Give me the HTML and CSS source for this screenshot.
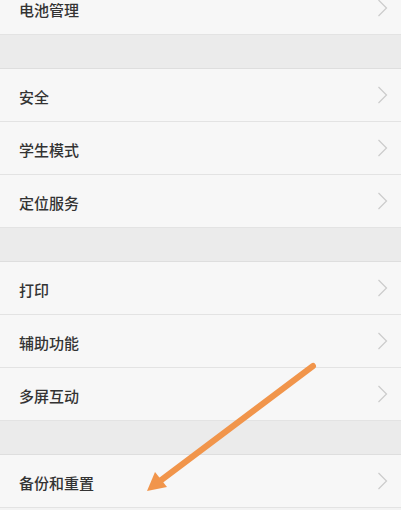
FILE: index.html
```html
<!DOCTYPE html>
<html lang="zh">
<head>
<meta charset="utf-8">
<link rel="stylesheet" href="styles.css">
</head>
<body>
<div class="page">
  <div class="list">
    <div class="row first"><span class="label">电池管理</span><svg class="chev" width="11" height="18" viewBox="0 0 11 18"><polyline points="1.5,1 9.5,9 1.5,17" /></svg></div>
  </div>
  <div class="gap"></div>
  <div class="list">
    <div class="row"><span class="label">安全</span><svg class="chev" width="11" height="18" viewBox="0 0 11 18"><polyline points="1.5,1 9.5,9 1.5,17" /></svg></div>
    <div class="row"><span class="label">学生模式</span><svg class="chev" width="11" height="18" viewBox="0 0 11 18"><polyline points="1.5,1 9.5,9 1.5,17" /></svg></div>
    <div class="row"><span class="label">定位服务</span><svg class="chev" width="11" height="18" viewBox="0 0 11 18"><polyline points="1.5,1 9.5,9 1.5,17" /></svg></div>
  </div>
  <div class="gap"></div>
  <div class="list">
    <div class="row"><span class="label">打印</span><svg class="chev" width="11" height="18" viewBox="0 0 11 18"><polyline points="1.5,1 9.5,9 1.5,17" /></svg></div>
    <div class="row"><span class="label">辅助功能</span><svg class="chev" width="11" height="18" viewBox="0 0 11 18"><polyline points="1.5,1 9.5,9 1.5,17" /></svg></div>
    <div class="row"><span class="label">多屏互动</span><svg class="chev" width="11" height="18" viewBox="0 0 11 18"><polyline points="1.5,1 9.5,9 1.5,17" /></svg></div>
  </div>
  <div class="gap"></div>
  <div class="list">
    <div class="row"><span class="label">备份和重置</span><svg class="chev" width="11" height="18" viewBox="0 0 11 18"><polyline points="1.5,1 9.5,9 1.5,17" /></svg></div>
  </div>
  <svg class="arrow" width="401" height="510" viewBox="0 0 401 510">
    <line x1="313" y1="366" x2="160" y2="481" stroke="#f1954b" stroke-width="6" stroke-linecap="round"/>
    <polygon points="147,491 155,472 167,487" fill="#f1954b"/>
  </svg>
</div>
</body>
</html>
```

FILE: styles.css
```css
html, body {
  margin: 0;
  padding: 0;
  background: #f3f3f3;
}
body {
  width: 401px;
  height: 510px;
  overflow: hidden;
  font-family: "Noto Sans CJK SC", "Noto Sans", sans-serif;
}
.page {
  position: relative;
  width: 401px;
  height: 510px;
  overflow: hidden;
  display: flex;
  flex-direction: column;
}
.list {
  display: flex;
  flex-direction: column;
  background: #f7f7f7;
}
.row {
  box-sizing: content-box;
  height: 49px;
  padding: 3px 13px 0 19px;
  border-bottom: 1px solid #e3e3e3;
  display: flex;
  align-items: center;
  justify-content: space-between;
}
.row.first {
  margin-top: -18px;
}
.label {
  font-size: 15px;
  font-weight: 500;
  color: #333333;
  line-height: 20px;
}
.chev {
  display: block;
  margin-top: -3px;
  fill: none;
  stroke: #cbcbcb;
  stroke-width: 1.2;
}
.gap {
  height: 33px;
  background: #ebebeb;
  border-bottom: 1px solid #dedede;
  flex-shrink: 0;
}
.gap:first-of-type {
  height: 32px;
}
.arrow {
  position: absolute;
  left: 0;
  top: 0;
}
```
